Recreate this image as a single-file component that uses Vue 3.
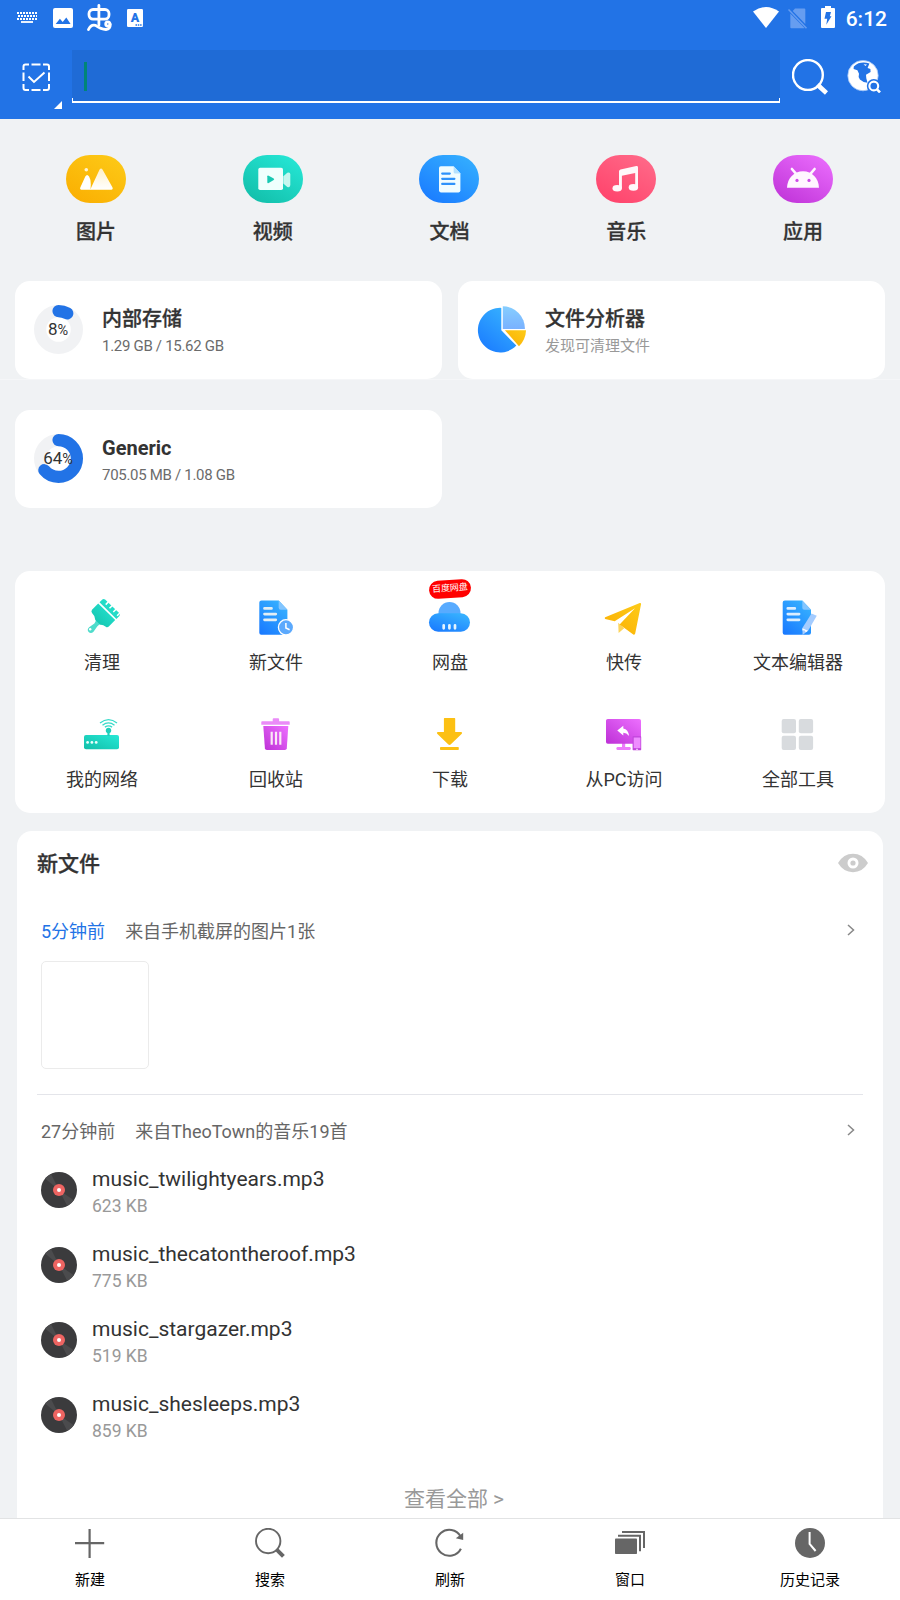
<template>
  <div class="fm-screen">
    <!-- Shared icon sprite -->
    <svg class="fm-sprite" width="0" height="0" aria-hidden="true">
      <defs>
        <linearGradient id="g-teal" x1="0" y1="1" x2="1" y2="0">
          <stop offset="0" stop-color="#12bfa9" /><stop offset="1" stop-color="#27e8d6" />
        </linearGradient>
        <linearGradient id="g-blue" x1="0" y1="1" x2="0.7" y2="0">
          <stop offset="0" stop-color="#1877ff" /><stop offset="1" stop-color="#36b0ff" />
        </linearGradient>
        <linearGradient id="g-yellow" x1="0" y1="1" x2="1" y2="0">
          <stop offset="0" stop-color="#fbae02" /><stop offset="1" stop-color="#fdcb18" />
        </linearGradient>
        <linearGradient id="g-purple" x1="0" y1="1" x2="1" y2="0">
          <stop offset="0" stop-color="#bd30d6" /><stop offset="1" stop-color="#ed70ff" />
        </linearGradient>
        <linearGradient id="g-sky" x1="0" y1="0" x2="0" y2="1">
          <stop offset="0" stop-color="#86ceff" /><stop offset="1" stop-color="#79b1ff" />
        </linearGradient>
        <linearGradient id="g-hill" x1="0" y1="0" x2="0" y2="1">
          <stop offset="0" stop-color="#fff0c8" /><stop offset="1" stop-color="#fff" />
        </linearGradient>
      </defs>

      <!-- categories -->
      <symbol id="c-image" viewBox="0 0 60 48">
        <circle cx="20.3" cy="14.7" r="1.8" fill="#fff3d2" />
        <path d="M25 33 33.6 14.6q1.4-2 2.9 0L46.4 32.2q1 2.4-1.2 2.5H24z" fill="url(#g-hill)" />
        <path d="M15.2 34.7q-1.8-.3-.9-2.3l5-10.9q1.7-3 3.8 0 2.1 3.7 1.7 8.1l-.3 5.1z" fill="#fff" />
      </symbol>
      <symbol id="c-video" viewBox="0 0 60 48">
        <rect x="15.3" y="12.8" width="24.7" height="22.2" rx="1.8" fill="#effffd" />
        <path d="M40.3 21.3l4-3.5q3-1 3 1.8v10.5q0 2.8-3 1.8l-4-3.4z" fill="#c5f7ef" />
        <path d="M24.3 21.3q.1-1.2 1.4-.6l5 2.9q1 .8 0 1.5l-5 2.9q-1.3.5-1.4-.8z" fill="#18c9b3" />
      </symbol>
      <symbol id="c-doc" viewBox="0 0 60 48">
        <path d="M21.8 11.2h12.8l6.8 7.3v17.1q0 1.8-1.8 1.8H21.8q-1.8 0-1.8-1.8V13q0-1.8 1.8-1.8z" fill="#f0fcff" />
        <path d="M34.6 11.2l6.8 7.3h-5.2q-1.6 0-1.6-1.6z" fill="#b4e1ff" />
        <path d="M23.2 18.6h7.6M23.2 23.8h12.2M23.2 28.9h12.2" stroke="#2d92fb" stroke-width="2.2" stroke-linecap="round" />
      </symbol>
      <symbol id="c-music" viewBox="0 0 60 48">
        <path d="M23 16.3q0-1.5 1.5-1.9l15.8-3.3q1.7-.3 1.7 1.3v19.9h-2.8V18.1l-13.3 2.7v12.4H23z" fill="#fff8fa" />
        <ellipse cx="21.2" cy="33.3" rx="4.7" ry="3.3" fill="#fff8fa" />
        <ellipse cx="37.4" cy="32.4" rx="4.7" ry="3.3" fill="#fff8fa" />
      </symbol>
      <symbol id="c-app" viewBox="0 0 60 48">
        <path d="M14 32.8C14.4 23 21 16.2 30 16.2S45.6 23 46 32.8z" fill="#fff6ff" />
        <path d="M18.9 14l4 4.6M41.6 14l-4 4.6" stroke="#fff6ff" stroke-width="2.6" stroke-linecap="round" />
        <circle cx="24" cy="25.4" r="1.6" fill="#cf4be8" />
        <circle cx="36" cy="25.4" r="1.6" fill="#cf4be8" />
      </symbol>

      <!-- tools -->
      <symbol id="t-clean" viewBox="0 0 40 40">
        <path d="M14 21.5l5.500 5q-2.600.8-4.300 3.100l-3.700 5.200q-2.500 2.300-4.900.3-2-2.600.5-4.900l5.300-3.800q1.900-1.500 1.600-4.900z" fill="#4fdccb" />
        <circle cx="8.2" cy="32.3" r="1.2" fill="#fff" />
        <path d="M10 12.7l6.200-6.300 17 16.500-6.400 6.600q-1.500 1.300-3 .2-2.800-2.300-5.600-2L13.300 23q0-4-3.100-6.700-1.500-2-.2-3.600z" fill="url(#g-teal)" />
        <path d="M17.5 5.200l2.800-2.800q1.400-.9 2.800.2l14.300 13.700q1.100 1.400 0 2.600l-3 3z" fill="#23dcc8" />
        <path d="M26.4 4.900l-2.700 2.700M30.2 8.600l-2.700 2.700M34 12.300l-2.700 2.700M37.800 16l-2.700 2.700" stroke="#fff" stroke-width="1.500" />
      </symbol>
      <symbol id="t-newfile" viewBox="0 0 40 40">
        <path d="M5.500 3.400h17.200l8.700 9.400v23q0 2-2 2H5.300q-2 0-2-2V5.600q0-2.200 2.200-2.200z" fill="url(#g-blue)" />
        <path d="M22.700 3.400l8.700 9.400h-6.700q-2 0-2-2z" fill="#82c5ff" />
        <path d="M8.500 11.400h7M8.500 17.100h11.300M8.500 22.800h11.300" stroke="#e3eef4" stroke-width="2.700" stroke-linecap="round" />
        <circle cx="30" cy="30.300" r="7.600" fill="#5ba9fd" stroke="#fff" stroke-width="1.300" />
        <path d="M29.900 26v5l3.700 1.700" stroke="#fff" stroke-width="1.500" fill="none" />
      </symbol>
      <symbol id="t-cloud" viewBox="0 0 40 40" overflow="visible">
        <circle cx="19.500" cy="16" r="11" fill="#58abff" />
        <rect x="-1" y="16.300" width="41" height="18.400" rx="9.200" fill="url(#g-blue)" />
        <path d="M13.700 28.300v3M19.400 28.300v3M25 28.300v3" stroke="#e4f4ff" stroke-width="2.700" stroke-linecap="round" />
      </symbol>
      <symbol id="t-send" viewBox="0 0 40 40">
        <path d="M14.200 25.800l6 5.400-5.600 4.700z" fill="#fdd45b" />
        <path d="M1.200 20.200L35.800 6q1.400-.2 1.300 1.100l-5.900 29.500q-.4 1.500-1.900.9L15.600 27.500 31 11.300 10.700 24.300 1.200 21.900q-1.100-.8 0-1.700z" fill="url(#g-yellow)" />
      </symbol>
      <symbol id="t-editor" viewBox="0 0 40 40">
        <path d="M6.900 3.400h17.400l8.700 9.400v23q0 2-2 2H6.700q-2 0-2-2V5.600q0-2.200 2.200-2.200z" fill="url(#g-blue)" />
        <path d="M24.300 3.400l8.700 9.400h-6.700q-2 0-2-2z" fill="#82c5ff" />
        <path d="M9.800 11.400h7M9.800 17.100h11.300M9.800 22.800h11.300" stroke="#dceeff" stroke-width="2.700" stroke-linecap="round" />
        <path d="M33.500 16.500l5.300 2.300-8.700 15-5.500 4.200-.2-7z" fill="#a4ccff" />
        <path d="M24.400 31.200l5.500 2.500-2 1.600-1.500-2-2 .3z" fill="#fff" />
      </symbol>
      <symbol id="t-network" viewBox="0 0 40 40">
        <rect x="2" y="21" width="35" height="14.200" rx="2" fill="url(#g-teal)" />
        <circle cx="5.600" cy="28.400" r="1.400" fill="#eafffb" />
        <circle cx="9.900" cy="28.400" r="1.400" fill="#eafffb" />
        <circle cx="14.200" cy="28.400" r="1.400" fill="#eafffb" />
        <circle cx="26.500" cy="16.500" r="2.700" fill="#1fcfbb" />
        <path d="M26.500 17v5" stroke="#1fcfbb" stroke-width="2.200" />
        <path d="M18 9q8.500-6.800 17 0M20.500 11.200q6-4.600 12 0M22.900 13.100q3.600-2.500 7.200 0" stroke="#35dbc9" stroke-width="1.300" fill="none" />
      </symbol>
      <symbol id="t-trash" viewBox="0 0 40 40">
        <path d="M16.700 7.200V5.300q0-1 1-1h4.400q1 0 1 1v1.900h9.800q.8 0 .8.800v2.800H5.300V8q0-.8.8-.8z" fill="#ea8bf8" />
        <path d="M7.300 12h25l-1.500 22.200q-.2 1.800-2 1.800h-17.900q-1.800 0-2-1.800z" fill="url(#g-purple)" />
        <path d="M15.700 17.700v13M20 17.700v13M24.300 17.700v13" stroke="#fbe8f6" stroke-width="2.200" />
      </symbol>
      <symbol id="t-download" viewBox="0 0 40 40">
        <path d="M14.500 4.100h10.100q.6 0 .6.600v13.200h6.100q1.400.6.500 1.900L20.600 30.600q-1.100.9-2.200 0L7.200 19.800q-.9-1.300.5-1.900h6.200V4.700q0-.6.600-.6z" fill="#fcc013" />
        <rect x="10" y="33" width="18.800" height="3" rx=".8" fill="#fcc013" />
      </symbol>
      <symbol id="t-pc" viewBox="0 0 40 40">
        <path d="M18 29h3.200v4h4.500q1.200.2 1.200 1.500t-1.200 1.500H13.500q-1.200-.2-1.200-1.500t1.200-1.500H18z" fill="#ed7bfb" />
        <rect x="2" y="5" width="35" height="24.700" rx="1.800" fill="url(#g-purple)" />
        <path d="M13.300 16.400l6-4.700v2.800q5 1 5.800 7.400-2.500-3.100-5.800-3.100v2.800z" fill="#fff" />
        <rect x="28.600" y="22.300" width="8.600" height="13.900" rx=".6" fill="#c145dc" />
        <rect x="29.700" y="23.500" width="6.700" height="10.600" fill="#ee8cff" />
        <path d="M32 35.300h2" stroke="#fff" stroke-width=".8" />
      </symbol>
      <symbol id="t-all" viewBox="0 0 40 40">
        <g fill="#d8dbde">
          <rect x="3.700" y="4.900" width="14.300" height="14.300" rx="2" />
          <rect x="20.800" y="4.900" width="14.300" height="14.300" rx="2" />
          <rect x="3.700" y="21.800" width="14.300" height="14.300" rx="2" />
          <rect x="20.800" y="21.800" width="14.300" height="14.300" rx="2" />
        </g>
      </symbol>

      <!-- bottom bar -->
      <symbol id="b-add" viewBox="0 0 30 30">
        <path d="M14.600.9v29M0 15.100h29.200" stroke="#666" stroke-width="2.200" />
      </symbol>
      <symbol id="b-search" viewBox="0 0 30 30">
        <circle cx="13.200" cy="13" r="12.200" fill="none" stroke="#666" stroke-width="1.900" />
        <path d="M21.700 21.700l6.700 6.600" stroke="#666" stroke-width="4" />
      </symbol>
      <symbol id="b-refresh" viewBox="0 0 30 30">
        <path d="M25.600 8.300A13 13 0 1 0 25.900 20.700" fill="none" stroke="#666" stroke-width="2.100" />
        <path d="M28.200 4.800v7.200l-7.400-1.800z" fill="#666" />
      </symbol>
      <symbol id="b-window" viewBox="0 0 30 30">
        <rect x="0" y="10.600" width="22" height="15.400" rx=".8" fill="#666" />
        <path d="M3 7.800h22v15.500M7 3.900h22v16" fill="none" stroke="#666" stroke-width="2" />
      </symbol>
      <symbol id="b-history" viewBox="0 0 30 30">
        <circle cx="15" cy="15" r="15" fill="#666" />
        <path d="M14.600 4v11.800l6 7.200" fill="none" stroke="#fff" stroke-width="2" />
      </symbol>
    </svg>

    <!-- Header -->
    <header class="fm-header">
      <div class="fm-status">
        <svg class="st-keyboard" width="20" height="12" viewBox="0 0 20 12">
          <path d="M0 1h20M0 7h20" stroke="#fff" stroke-width="1.800" stroke-dasharray="2 1" />
          <path d="M1 4h19" stroke="#fff" stroke-width="1.800" stroke-dasharray="2 1" />
          <path d="M4 10h12" stroke="#fff" stroke-width="1.800" />
        </svg>
        <svg class="st-picture" width="20" height="20" viewBox="0 0 20 20">
          <rect width="20" height="20" rx="2" fill="#fff" />
          <path d="M2.700 16l4.200-5.200 2.800 3.300 3.600-4.600 4.300 6.500z" fill="#2273e6" />
        </svg>
        <svg class="st-bug" width="25" height="28" viewBox="0 0 25 28" fill="none" stroke="#fff" stroke-width="2.800" stroke-linecap="round">
          <rect x="2" y="5.500" width="20" height="9.600" rx="4" />
          <path d="M11.900 1.500v19.500" />
          <path d="M1.500 25.500Q4 20 8.500 21.300q5.500 4 10.500 4.200 4.300-.5 4.300-5" />
          <circle cx="20.800" cy="20" r="2.100" />
        </svg>
        <svg class="st-ime" width="16" height="18" viewBox="0 0 16 18">
          <rect width="16" height="18" rx="1.200" fill="#fff" />
          <text x="8" y="13.200" text-anchor="middle" font-family="Roboto, sans-serif" font-size="12.500" font-weight="900" fill="#2273e6">A</text>
          <path d="M8.500 16h7" stroke="#2273e6" stroke-width="1.500" stroke-dasharray="1.500 .8" />
        </svg>
        <span class="fm-spacer" />
        <svg class="st-wifi" width="26" height="21" viewBox="0 0 26 21">
          <path d="M0 4.500Q13-4.500 26 4.500L13 21z" fill="#fff" />
        </svg>
        <svg class="st-sim" width="20" height="21" viewBox="0 0 20 21" fill="#669df0">
          <path d="M7 .5h9.300q1 0 1 1v14.500L4.700 3z" />
          <path d="M2.300 5.500L16.500 20q-.2.300-1 .3H3.300q-1 0-1-1z" />
          <path d="M.5 1.500l18 18.700" stroke="#669df0" stroke-width="1.500" />
        </svg>
        <svg class="st-battery" width="14" height="22" viewBox="0 0 14 22">
          <path d="M4 0h6v2h3q1 0 1 1v18q0 1-1 1H1q-1 0-1-1V3q0-1 1-1h3z" fill="#fff" />
          <path d="M5 6h5l-1.200 4.200h1.700L5.300 18.800l.9-6H3.500z" fill="#2273e6" />
        </svg>
        <span class="fm-clock">6:12</span>
      </div>

      <div class="fm-searchbar">
        <button class="fm-select" aria-label="选择">
          <svg width="28" height="28" viewBox="0 0 28 28" fill="none" stroke="#fff" stroke-width="2">
            <path d="M1.500 7V3.500q0-2 2-2h3.500M9.500 1.500h9M21 1.500h4q2 0 2 2V7M27 9.500v8.500M27 21v4q0 2-2 2h-4M18.500 27h-9M7 27H3.500q-2 0-2-2v-4M1.500 18V9.500" />
            <path d="M6.500 13.500l5.500 5.400L22.500 9.500" />
          </svg>
          <svg class="fm-corner" width="8" height="8" viewBox="0 0 8 8"><path d="M8 0v8H0z" fill="#fff" /></svg>
        </button>
        <div class="fm-input"><span class="fm-caret" /></div>
        <svg class="fm-find" width="36" height="36" viewBox="0 0 36 36">
          <circle cx="15.900" cy="16" r="14.900" fill="none" stroke="#fff" stroke-width="2.400" />
          <path d="M25.500 25.500l3 3 6 5.500" stroke="#fff" stroke-width="4.600" />
        </svg>
        <svg class="fm-web" width="34" height="34" viewBox="0 0 34 34">
          <circle cx="16" cy="16.600" r="15.200" fill="#fff" stroke="#9ec3f7" stroke-width=".8" />
          <path d="M6.800 7.600q2-2 4.600-3.400 5.500-1.600 11 .2l-1.800 4.500 2.800 1.200.2 3-4.600 2.600.3 3.600 1.200 4.400q-4.500-.2-7.600-3.200-2-3-.9-5.800l-1.600-3.400-3.800-1.200z" fill="#2273e6" />
          <path d="M16.500 5.200l3.500.3-1.500 1.500z" fill="#fff" />
          <circle cx="26.800" cy="27" r="7" fill="#2273e6" />
          <circle cx="26.800" cy="27" r="4.400" fill="none" stroke="#fff" stroke-width="2.100" />
          <path d="M30 30.400l3 3" stroke="#fff" stroke-width="2.600" />
        </svg>
      </div>
    </header>

    <main class="fm-main">
      <!-- Categories -->
      <nav class="fm-cats">
        <div v-for="c in categories" :key="c.id" class="fm-cat">
          <span class="fm-pill" :class="`fm-pill--${c.id}`">
            <svg width="60" height="48"><use :href="`#c-${c.id}`" /></svg>
          </span>
          <span class="fm-cat-label">{{ c.label }}</span>
        </div>
      </nav>

      <!-- Storage -->
      <section class="fm-storage">
        <article class="fm-card">
          <div class="fm-ring">
            <svg width="50" height="50" viewBox="0.5 0.5 50 50">
              <circle cx="25" cy="25" r="18.400" class="ring-track" />
              <circle cx="25" cy="25" r="18.400" pathLength="100" class="ring-value" stroke-dasharray="8 100" transform="rotate(-90 25 25)" />
            </svg>
            <span class="fm-percent">8<small>%</small></span>
          </div>
          <div class="fm-card-text">
            <h3>内部存储</h3>
            <p>1.29 GB / 15.62 GB</p>
          </div>
        </article>

        <article class="fm-card">
          <svg class="fm-pie" width="50" height="50" viewBox="0 0 50 50">
            <path d="M24.300 2.900V25.300L39.300 40.600A22.300 22.300 0 1 1 24.300 2.900z" fill="url(#g-blue)" />
            <path d="M25.800 1.300A22.200 22.200 0 0 1 47.900 23.900H25.800z" fill="url(#g-sky)" />
            <path d="M27.900 25.300H49q-.3 9.400-7 15.900z" fill="url(#g-yellow)" />
          </svg>
          <div class="fm-card-text">
            <h3>文件分析器</h3>
            <p class="muted">发现可清理文件</p>
          </div>
        </article>

        <article class="fm-card">
          <div class="fm-ring">
            <svg width="50" height="50" viewBox="0.5 0.5 50 50">
              <circle cx="25" cy="25" r="18.400" class="ring-track" />
              <circle cx="25" cy="25" r="18.400" pathLength="100" class="ring-value" stroke-dasharray="64 100" transform="rotate(-90 25 25)" />
            </svg>
            <span class="fm-percent">64<small>%</small></span>
          </div>
          <div class="fm-card-text">
            <h3 class="latin">Generic</h3>
            <p>705.05 MB / 1.08 GB</p>
          </div>
        </article>
      </section>

      <!-- Tools -->
      <section class="fm-tools">
        <div v-for="t in tools" :key="t.id" class="fm-tool">
          <svg width="40" height="40"><use :href="`#t-${t.id}`" /></svg>
          <span v-if="t.badge" class="fm-badge">{{ t.badge }}</span>
          <span class="fm-tool-label">{{ t.label }}</span>
        </div>
      </section>

      <!-- Recent files -->
      <section class="fm-recent">
        <div class="fm-recent-head">
          <h2>新文件</h2>
          <svg width="30" height="20" viewBox="0 0 30 20">
            <path d="M0 10Q5.500.8 15 .8T30 10Q24.500 19.200 15 19.200T0 10z" fill="#ccc" />
            <circle cx="15" cy="10" r="5.500" fill="#fff" />
            <circle cx="15" cy="10" r="2.600" fill="#ccc" />
          </svg>
        </div>

        <div class="fm-group fm-group--first">
          <span class="fm-time fm-time--new">5分钟前</span>
          <span>来自手机截屏的图片1张</span>
          <svg class="fm-chevron" width="8" height="12" viewBox="0 0 8 12"><path d="M1 1l5.500 5L1 11" /></svg>
        </div>
        <div class="fm-thumb" />

        <div class="fm-divider" />

        <div class="fm-group fm-group--second">
          <span class="fm-time">27分钟前</span>
          <span>来自TheoTown的音乐19首</span>
          <svg class="fm-chevron" width="8" height="12" viewBox="0 0 8 12"><path d="M1 1l5.500 5L1 11" /></svg>
        </div>

        <div v-for="s in songs" :key="s.name" class="fm-song">
          <svg width="36" height="36" viewBox="0 0 36 36">
            <circle cx="18" cy="18" r="18" fill="#3b3b3d" />
            <path d="M18 18L4 6.600A18 18 0 0 1 10 1.900zM18 18l14.800 10.300a18 18 0 0 1-6.500 5.600z" fill="#4b4b4d" />
            <circle cx="18" cy="18" r="6" fill="#ed6462" />
            <circle cx="18" cy="18" r="2" fill="#fff" />
          </svg>
          <div class="fm-song-text">
            <p class="fm-song-name">{{ s.name }}</p>
            <p class="fm-song-size">{{ s.size }}</p>
          </div>
        </div>

        <div class="fm-all">查看全部 &gt;</div>
      </section>
    </main>

    <!-- Bottom bar -->
    <footer class="fm-bottom">
      <div v-for="a in actions" :key="a.id" class="fm-action">
        <svg width="30" height="30"><use :href="`#b-${a.id}`" /></svg>
        <span>{{ a.label }}</span>
      </div>
    </footer>
  </div>
</template>

<script setup>
const categories = [
  { id: 'image', label: '图片' },
  { id: 'video', label: '视频' },
  { id: 'doc', label: '文档' },
  { id: 'music', label: '音乐' },
  { id: 'app', label: '应用' },
]

const tools = [
  { id: 'clean', label: '清理' },
  { id: 'newfile', label: '新文件' },
  { id: 'cloud', label: '网盘', badge: '百度网盘' },
  { id: 'send', label: '快传' },
  { id: 'editor', label: '文本编辑器' },
  { id: 'network', label: '我的网络' },
  { id: 'trash', label: '回收站' },
  { id: 'download', label: '下载' },
  { id: 'pc', label: '从PC访问' },
  { id: 'all', label: '全部工具' },
]

const songs = [
  { name: 'music_twilightyears.mp3', size: '623 KB' },
  { name: 'music_thecatontheroof.mp3', size: '775 KB' },
  { name: 'music_stargazer.mp3', size: '519 KB' },
  { name: 'music_shesleeps.mp3', size: '859 KB' },
]

const actions = [
  { id: 'add', label: '新建' },
  { id: 'search', label: '搜索' },
  { id: 'refresh', label: '刷新' },
  { id: 'window', label: '窗口' },
  { id: 'history', label: '历史记录' },
]
</script>

<style>
body {
  margin: 0;
  background: #f0f2f4;
}
</style>

<style scoped>
.fm-screen {
  display: flex;
  flex-direction: column;
  width: 900px;
  height: 1600px;
  overflow: hidden;
  background: #f0f2f4;
  color: #333;
  font-family: Roboto, 'Noto Sans CJK SC', sans-serif;
}
.fm-screen svg { display: block; flex-shrink: 0; }
.fm-sprite { position: absolute; }
h2, h3, p { margin: 0; }

/* ── HEADER ── */
.fm-header {
  height: 119px;
  flex-shrink: 0;
  background: #2273e6;
}
.fm-status {
  display: flex;
  align-items: center;
  height: 36px;
  padding: 0 13px 0 17px;
}
.st-picture { margin-left: 16px; }
.st-bug { margin-left: 14px; }
.st-ime { margin-left: 15px; }
.fm-spacer { flex: 1; }
.st-wifi { margin-bottom: 1px; }
.st-sim { margin-left: 9px; }
.st-battery { margin-left: 13px; margin-bottom: 2px; }
.fm-clock {
  margin-left: 11px;
  padding-top: 2px;
  color: #fff;
  font-size: 21px;
  font-weight: 500;
  line-height: 36px;
}

.fm-searchbar {
  display: flex;
  align-items: flex-start;
  padding: 14px 18px 0 22px;
}
.fm-select {
  position: relative;
  display: flex;
  align-items: flex-start;
  width: 50px;
  height: 60px;
  padding: 13px 0 0;
  border: none;
  background: none;
}
.fm-corner { position: absolute; left: 32px; top: 51px; }
.fm-input {
  box-sizing: border-box;
  width: 708px;
  height: 53px;
  padding: 12px;
  background:
    linear-gradient(#fff, #fff) 0 48px / 1px 3px no-repeat,
    linear-gradient(#fff, #fff) 707px 48px / 1px 3px no-repeat,
    #1f6bd6;
  border-bottom: 2px solid #fff;
}
.fm-caret {
  display: block;
  width: 3px;
  height: 29px;
  background: #008577;
}
.fm-find { margin: 9px 0 0 12px; }
.fm-web { margin: 9px 0 0 19px; }

/* ── CATEGORIES ── */
.fm-main { flex: 1; min-height: 0; overflow: hidden; }
.fm-cats {
  display: grid;
  grid-template-columns: repeat(5, 1fr);
  padding: 36px 8.5px 35px 7.5px;
}
.fm-cat {
  display: flex;
  flex-direction: column;
  align-items: center;
  gap: 15px;
}
.fm-pill { width: 60px; height: 48px; border-radius: 24px; }
.fm-pill--image { background: linear-gradient(30deg, #faad00, #fdcb18); }
.fm-pill--video { background: linear-gradient(30deg, #11bba6, #27ead9); }
.fm-pill--doc { background: linear-gradient(30deg, #1877ff, #36b3ff); }
.fm-pill--music { background: linear-gradient(30deg, #ff4069, #ff6d8b); }
.fm-pill--app { background: linear-gradient(30deg, #bd30d6, #ed70ff); }
.fm-cat-label {
  font-size: 20px;
  font-weight: 500;
  line-height: 28px;
  -webkit-text-stroke: 0.3px #333;
}

/* ── STORAGE ── */
.fm-storage {
  display: grid;
  grid-template-columns: repeat(2, 427px);
  grid-auto-rows: 98px;
  gap: 31px 16px;
  padding: 0 15px;
  background: linear-gradient(#f5f6f8, #f5f6f8) 0 98px / 100% 1px no-repeat;
}
.fm-card {
  display: flex;
  align-items: center;
  gap: 18px;
  box-sizing: border-box;
  padding-left: 19px;
  background: #fff;
  border-radius: 15px;
}
.fm-ring { position: relative; width: 50px; height: 50px; }
.ring-track { fill: none; stroke: #f1f2f4; stroke-width: 12.2; }
.ring-value { fill: none; stroke: #2273e6; stroke-width: 12.2; stroke-linecap: round; }
.fm-percent {
  position: absolute;
  inset: 0 1px 0 -1px;
  font-size: 17px;
  line-height: 48px;
  text-align: center;
  white-space: nowrap;
}
.fm-percent small { font-size: 14.5px; }
.fm-card-text { padding-top: 5px; }
.fm-card-text h3 {
  font-size: 20px;
  font-weight: 500;
  line-height: 27px;
  -webkit-text-stroke: 0.3px #333;
}
.fm-card-text h3.latin { font-weight: 700; -webkit-text-stroke: 0; }
.fm-card-text p {
  color: #6b6b6b;
  font-size: 15px;
  letter-spacing: -0.3px;
  line-height: 26px;
}
.fm-card-text p.muted { color: #999; letter-spacing: 0; }

/* ── TOOLS ── */
.fm-tools {
  display: grid;
  grid-template-columns: repeat(5, 1fr);
  gap: 39px 0;
  margin: 63px 15px 18px;
  padding: 26px 0 21px;
  background: #fff;
  border-radius: 15px;
}
.fm-tool {
  position: relative;
  display: flex;
  flex-direction: column;
  align-items: center;
  gap: 14px;
}
.fm-tool svg { overflow: visible; }
.fm-tool-label { font-size: 18px; line-height: 24px; }
.fm-badge {
  position: absolute;
  left: 66px;
  top: -17px;
  width: 42px;
  height: 18px;
  border-radius: 9px;
  background: #f00;
  color: #fff;
  font-size: 9px;
  line-height: 17px;
  text-align: center;
  transform: rotate(-4deg);
}

/* ── RECENT ── */
.fm-recent {
  margin: 0 17px;
  padding: 0 20px;
  background: #fff;
  border-radius: 15px 15px 0 0;
}
.fm-recent-head {
  display: flex;
  align-items: center;
  justify-content: space-between;
  height: 65px;
  margin-right: -5px;
}
.fm-recent-head h2 {
  font-size: 21px;
  font-weight: 500;
  line-height: 30px;
  -webkit-text-stroke: 0.3px #333;
}
.fm-recent-head svg { margin-bottom: 2px; }
.fm-group {
  display: flex;
  align-items: center;
  gap: 20px;
  height: 40px;
  padding: 0 8px 0 4px;
  color: #666;
  font-size: 18px;
}
.fm-group--first { margin: 14px 0 11px; }
.fm-group--second { margin: 15px 0 2px; }
.fm-time--new { color: #2273e6; }
.fm-chevron {
  margin: 0 0 1px auto;
  fill: none;
  stroke: #888;
  stroke-width: 1.5;
}
.fm-thumb {
  box-sizing: border-box;
  width: 108px;
  height: 108px;
  margin-left: 4px;
  border: 1px solid #ebebeb;
  border-radius: 5px;
}
.fm-divider { height: 1px; margin-top: 25px; background: #e4e5ea; }
.fm-song {
  display: flex;
  align-items: center;
  gap: 15px;
  height: 75px;
  padding-left: 4px;
}
.fm-song-text { padding-top: 4px; }
.fm-song-name { font-size: 21px; line-height: 28px; }
.fm-song-size { color: #999; font-size: 17.5px; line-height: 26px; }
.fm-all {
  height: 40px;
  margin-top: 27px;
  padding-left: 8px;
  color: #999;
  font-size: 21px;
  line-height: 40px;
  text-align: center;
}

/* ── BOTTOM BAR ── */
.fm-bottom {
  display: grid;
  grid-template-columns: repeat(5, 1fr);
  box-sizing: border-box;
  height: 82px;
  flex-shrink: 0;
  padding-top: 9px;
  border-top: 1px solid #e2e3e4;
  background: #fff;
}
.fm-action {
  display: flex;
  flex-direction: column;
  align-items: center;
  gap: 11px;
  color: #000;
  font-size: 15px;
  line-height: 22px;
}
</style>
